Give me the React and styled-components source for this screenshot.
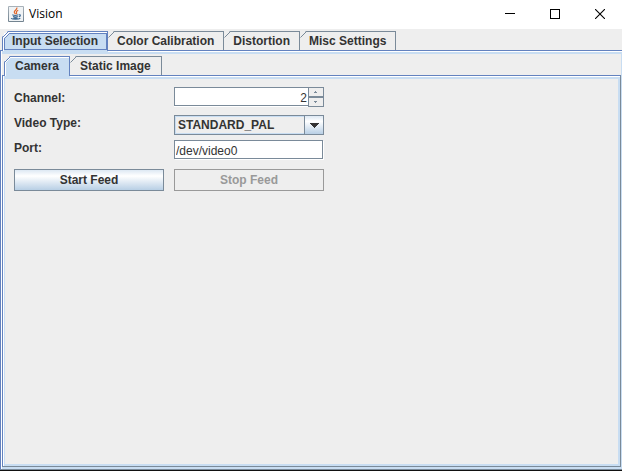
import { useState } from "react";
import styled, { createGlobalStyle } from "styled-components";

const colors = {
  face: "#eeeeee",
  text: "#333333",
  primary: "#6382bf",
  selected: "#c8ddf2",
  shadow: "#7a8a99",
  disabled: "#999999",
};

const MAIN_TABS = [
  { id: "input", label: "Input Selection" },
  { id: "color", label: "Color Calibration" },
  { id: "distortion", label: "Distortion" },
  { id: "misc", label: "Misc Settings" },
];

const SOURCE_TABS = [
  { id: "camera", label: "Camera" },
  { id: "static", label: "Static Image" },
];

export default function App() {
  const [mainTab, setMainTab] = useState("input");
  const [sourceTab, setSourceTab] = useState("camera");

  return (
    <>
      <GlobalStyle />
      <Window>
        <TitleBar />
        <TabbedPane>
          <TabStrip
            tabs={MAIN_TABS}
            current={mainTab}
            onSelect={setMainTab}
            focused
          />
          <OuterContent role="tabpanel">
            {mainTab === "input" && (
              <TabbedPane>
                <TabStrip
                  tabs={SOURCE_TABS}
                  current={sourceTab}
                  onSelect={setSourceTab}
                  nested
                />
                <InnerContent role="tabpanel">
                  {sourceTab === "camera" && <CameraForm />}
                </InnerContent>
              </TabbedPane>
            )}
          </OuterContent>
        </TabbedPane>
      </Window>
    </>
  );
}

function TitleBar() {
  return (
    <TitleBarStyled>
      <JavaIcon />
      <Title>Vision</Title>
      <WindowButton type="button" aria-label="Minimize">
        <svg width="10" height="10" shapeRendering="crispEdges">
          <path d="M0 4.5H10" stroke="#000" />
        </svg>
      </WindowButton>
      <WindowButton type="button" aria-label="Maximize">
        <svg width="10" height="10" shapeRendering="crispEdges">
          <path d="M.5 .5H9.5V9.5H.5Z" stroke="#000" fill="none" />
        </svg>
      </WindowButton>
      <WindowButton type="button" aria-label="Close">
        <svg width="10" height="10">
          <path d="M0 0L10 10M10 0L0 10" stroke="#000" strokeWidth="1.1" />
        </svg>
      </WindowButton>
    </TitleBarStyled>
  );
}

function JavaIcon() {
  return (
    <svg width="16" height="16" viewBox="0 0 16 16" aria-hidden="true">
      <defs>
        <linearGradient id="tile" x1="0" y1="0" x2="0" y2="1">
          <stop offset="0" stopColor="#a9b3bb" />
          <stop offset="1" stopColor="#71828f" />
        </linearGradient>
      </defs>
      <rect width="16" height="16" rx="1" fill="url(#tile)" />
      <rect x="1" y="1" width="14" height="14" fill="#f0f3f5" />
      <path
        d="M8.8 1.5C9.8 3.5 6 4.6 6.3 6.2C6.4 7 7.2 7.5 7.5 8.2M10.2 4.2C8.6 5 8 5.6 8.5 6.6C8.8 7.2 8.7 7.7 8.3 8.2"
        stroke="#e0672c"
        strokeWidth="1.2"
        fill="none"
      />
      <path
        d="M4.3 8.8C5.6 9.4 8.8 9.4 10.3 8.8M5 10.6C6.5 11.2 8.5 11.2 9.8 10.6M10.8 8.8C13 8.2 12.8 10.2 10.8 10.8M3 12.4C5 13.6 10.5 13.5 12.3 12.2M5.5 12.1C7 12.5 8.5 12.4 9.5 12.1"
        stroke="#3f6a93"
        strokeWidth="1.1"
        fill="none"
      />
    </svg>
  );
}

function TabStrip({ tabs, current, onSelect, focused, nested }) {
  return (
    <TabList role="tablist">
      {tabs.map((tab) => {
        const isSelected = tab.id === current;
        return (
          <Tab
            key={tab.id}
            type="button"
            role="tab"
            aria-selected={isSelected}
            $selected={isSelected}
            $focused={isSelected && focused}
            $nested={nested}
            onClick={() => onSelect(tab.id)}
          >
            <TabCorner selected={isSelected} focused={isSelected && focused} />
            {tab.label}
          </Tab>
        );
      })}
    </TabList>
  );
}

// cut top-left corner of a tab
function TabCorner({ selected, focused }) {
  return (
    <svg className="corner" width="9" height="9" aria-hidden="true">
      <path d="M0 0H6L0 6Z" fill={colors.face} />
      {focused && <path d="M2 2H7.5L2 7.5Z" fill="#fff" />}
      {selected && <path d="M1.5 7V6.5L6.5 1.5H7" stroke="#fff" fill="none" />}
      <path
        d="M.5 6.5L6.5 .5"
        stroke={selected ? colors.primary : colors.shadow}
      />
      {focused && <path d="M2.5 7.5L7.5 2.5" stroke={colors.primary} />}
    </svg>
  );
}

function CameraForm() {
  const [channel, setChannel] = useState(2);
  const [videoType, setVideoType] = useState("STANDARD_PAL");
  const [port, setPort] = useState("/dev/video0");
  const [isRunning, setIsRunning] = useState(false);

  return (
    <FormStyled onSubmit={(event) => event.preventDefault()}>
      <Label htmlFor="channel">Channel:</Label>
      <Spinner>
        <SpinnerInput
          id="channel"
          inputMode="numeric"
          value={channel}
          onChange={(event) => setChannel(Number(event.target.value) || 0)}
        />
        <SpinnerArrows>
          <SpinnerButton
            type="button"
            aria-label="Increase channel"
            onClick={() => setChannel(channel + 1)}
          >
            <svg width="4" height="2" shapeRendering="crispEdges">
              <path d="M1 0H2V1H3V2H0V1H1Z" fill={colors.shadow} />
            </svg>
          </SpinnerButton>
          <SpinnerButton
            type="button"
            aria-label="Decrease channel"
            onClick={() => setChannel(Math.max(0, channel - 1))}
          >
            <svg width="4" height="2" shapeRendering="crispEdges">
              <path d="M0 0H3V1H2V2H1V1H0Z" fill={colors.shadow} />
            </svg>
          </SpinnerButton>
        </SpinnerArrows>
      </Spinner>

      <Label htmlFor="video-type">Video Type:</Label>
      <Combo>
        <select
          id="video-type"
          value={videoType}
          onChange={(event) => setVideoType(event.target.value)}
        >
          <option>STANDARD_PAL</option>
          <option>STANDARD_NTSC</option>
        </select>
        <span className="arrow">
          <svg width="10" height="5" shapeRendering="crispEdges">
            <path d="M0 0H10L5 5Z" fill={colors.text} />
          </svg>
        </span>
      </Combo>

      <Label htmlFor="port">Port:</Label>
      <TextField
        id="port"
        type="text"
        spellCheck={false}
        value={port}
        onChange={(event) => setPort(event.target.value)}
      />

      <FeedButton
        type="button"
        disabled={isRunning}
        onClick={() => setIsRunning(true)}
      >
        Start Feed
      </FeedButton>
      <FeedButton
        type="button"
        disabled={!isRunning}
        onClick={() => setIsRunning(false)}
      >
        Stop Feed
      </FeedButton>
    </FormStyled>
  );
}

const GlobalStyle = createGlobalStyle`
  * {
    box-sizing: border-box;
  }
  body {
    margin: 0;
    background: ${colors.face};
    color: ${colors.text};
    font: bold 12px "Liberation Sans", Arial, sans-serif;
  }
  button, input, select {
    margin: 0;
    padding: 0;
    border-radius: 0;
    outline: none;
    color: inherit;
    font: inherit;
  }
  svg {
    display: block;
  }
`;

const Window = styled.div`
  display: flex;
  flex-direction: column;
  min-height: 100vh;
  border-bottom: 1px solid #111;
`;

const TitleBarStyled = styled.header`
  display: flex;
  align-items: center;
  height: 29px;
  padding: 0 0 2px 8px;
  background: #fff;
  color: #000;
`;

const Title = styled.h1`
  flex: 1;
  margin: 0 0 0 5px;
  font: 12px "Open Sans", "Noto Sans", sans-serif;
`;

const WindowButton = styled.button`
  display: flex;
  align-items: center;
  justify-content: center;
  width: 45px;
  height: 27px;
  border: none;
  background: none;
`;

const TabbedPane = styled.section`
  flex: 1;
  display: flex;
  flex-direction: column;
  padding-top: 2px;
  background: ${colors.face};
`;

const OuterContent = styled.div`
  flex: 1;
  display: flex;
  flex-direction: column;
  padding: 3px 1px 2px;
  border-left: 1px solid ${colors.primary};
  border-top: 1px solid ${colors.primary};
  border-bottom: 1px solid ${colors.shadow};
  box-shadow: inset 1px 1px #fff;
  background: ${colors.selected};
`;

const InnerContent = styled.div`
  flex: 1;
  padding: 11px;
  border: 1px solid ${colors.shadow};
  border-left-color: ${colors.primary};
  border-top-color: ${colors.primary};
  box-shadow: inset 1px 1px #fff, inset 2px 3px ${colors.selected},
    inset -2px -2px ${colors.selected};
`;

const TabList = styled.div`
  display: flex;
  padding-left: 2px;
`;

const Tab = styled.button`
  position: relative;
  height: 19px;
  padding: 0 ${({ $nested }) => ($nested ? "10px" : "9px")};
  border: 1px solid ${colors.shadow};
  border-bottom: none;
  border-left: none;
  background: ${colors.face};
  line-height: 18px;

  .corner {
    position: absolute;
    top: -1px;
    left: 0;
  }

  /* the selected tab runs over the edge of the panel below it */
  ${({ $selected }) =>
    $selected &&
    `
    z-index: 1;
    height: 20px;
    margin-bottom: -1px;
    padding-bottom: 1px;
    border-color: ${colors.primary};
    border-left: 1px solid ${colors.primary};
    background: ${colors.selected};
    box-shadow: inset 1px 1px #fff, 0 1px ${colors.selected};

    .corner {
      left: -1px;
    }
  `}

  ${({ $focused }) =>
    $focused &&
    `
    &::before {
      content: "";
      position: absolute;
      inset: 1px 0 1px 1px;
      border: 1px solid ${colors.primary};
    }
  `}
`;

const FormStyled = styled.form`
  display: grid;
  grid-template-columns: 150px 150px;
  grid-auto-rows: minmax(23px, auto);
  align-items: start;
  gap: 2px 10px;
`;

const Label = styled.label`
  line-height: 22px;
`;

const Spinner = styled.div`
  display: flex;
  height: 20px;
`;

const SpinnerInput = styled.input`
  flex: 1;
  min-width: 0;
  height: 19px;
  padding: 2px 1px 0;
  border: 1px solid ${colors.shadow};
  border-right: none;
  box-shadow: 0 1px #fff;
  background: #fff;
  font-weight: normal;
  text-align: right;
`;

const SpinnerArrows = styled.div`
  display: flex;
  flex-direction: column;
  width: 16px;
`;

const SpinnerButton = styled.button`
  flex: 1;
  display: flex;
  align-items: center;
  justify-content: center;
  border: 1px solid ${colors.shadow};
  background: ${colors.face};
`;

const Combo = styled.div`
  position: relative;
  height: 20px;
  margin-top: 3px;

  select {
    display: block;
    width: 100%;
    height: 20px;
    padding-left: 3px;
    border: 1px solid ${colors.shadow};
    box-shadow: inset 0 0 0 1px ${colors.selected};
    background: ${colors.face};
    appearance: none;
  }

  .arrow {
    position: absolute;
    top: 0;
    right: 0;
    display: flex;
    align-items: center;
    justify-content: center;
    width: 20px;
    height: 20px;
    border: 1px solid ${colors.shadow};
    background: linear-gradient(#dde8f3, #fff 30%, #b8cfe5);
    pointer-events: none;
  }
`;

const TextField = styled.input`
  width: 149px;
  height: 19px;
  margin-top: 3px;
  padding: 2px 1px 0;
  border: 1px solid ${colors.shadow};
  box-shadow: 1px 1px #fff;
  background: #fff;
  font-weight: normal;
`;

const FeedButton = styled.button`
  height: 22px;
  margin-top: 7px;
  border: 1px solid ${colors.shadow};
  background: linear-gradient(#dde8f3, #fff 30%, #b8cfe5);

  &:disabled {
    border-color: ${colors.disabled};
    background: ${colors.face};
    color: ${colors.disabled};
  }
`;
